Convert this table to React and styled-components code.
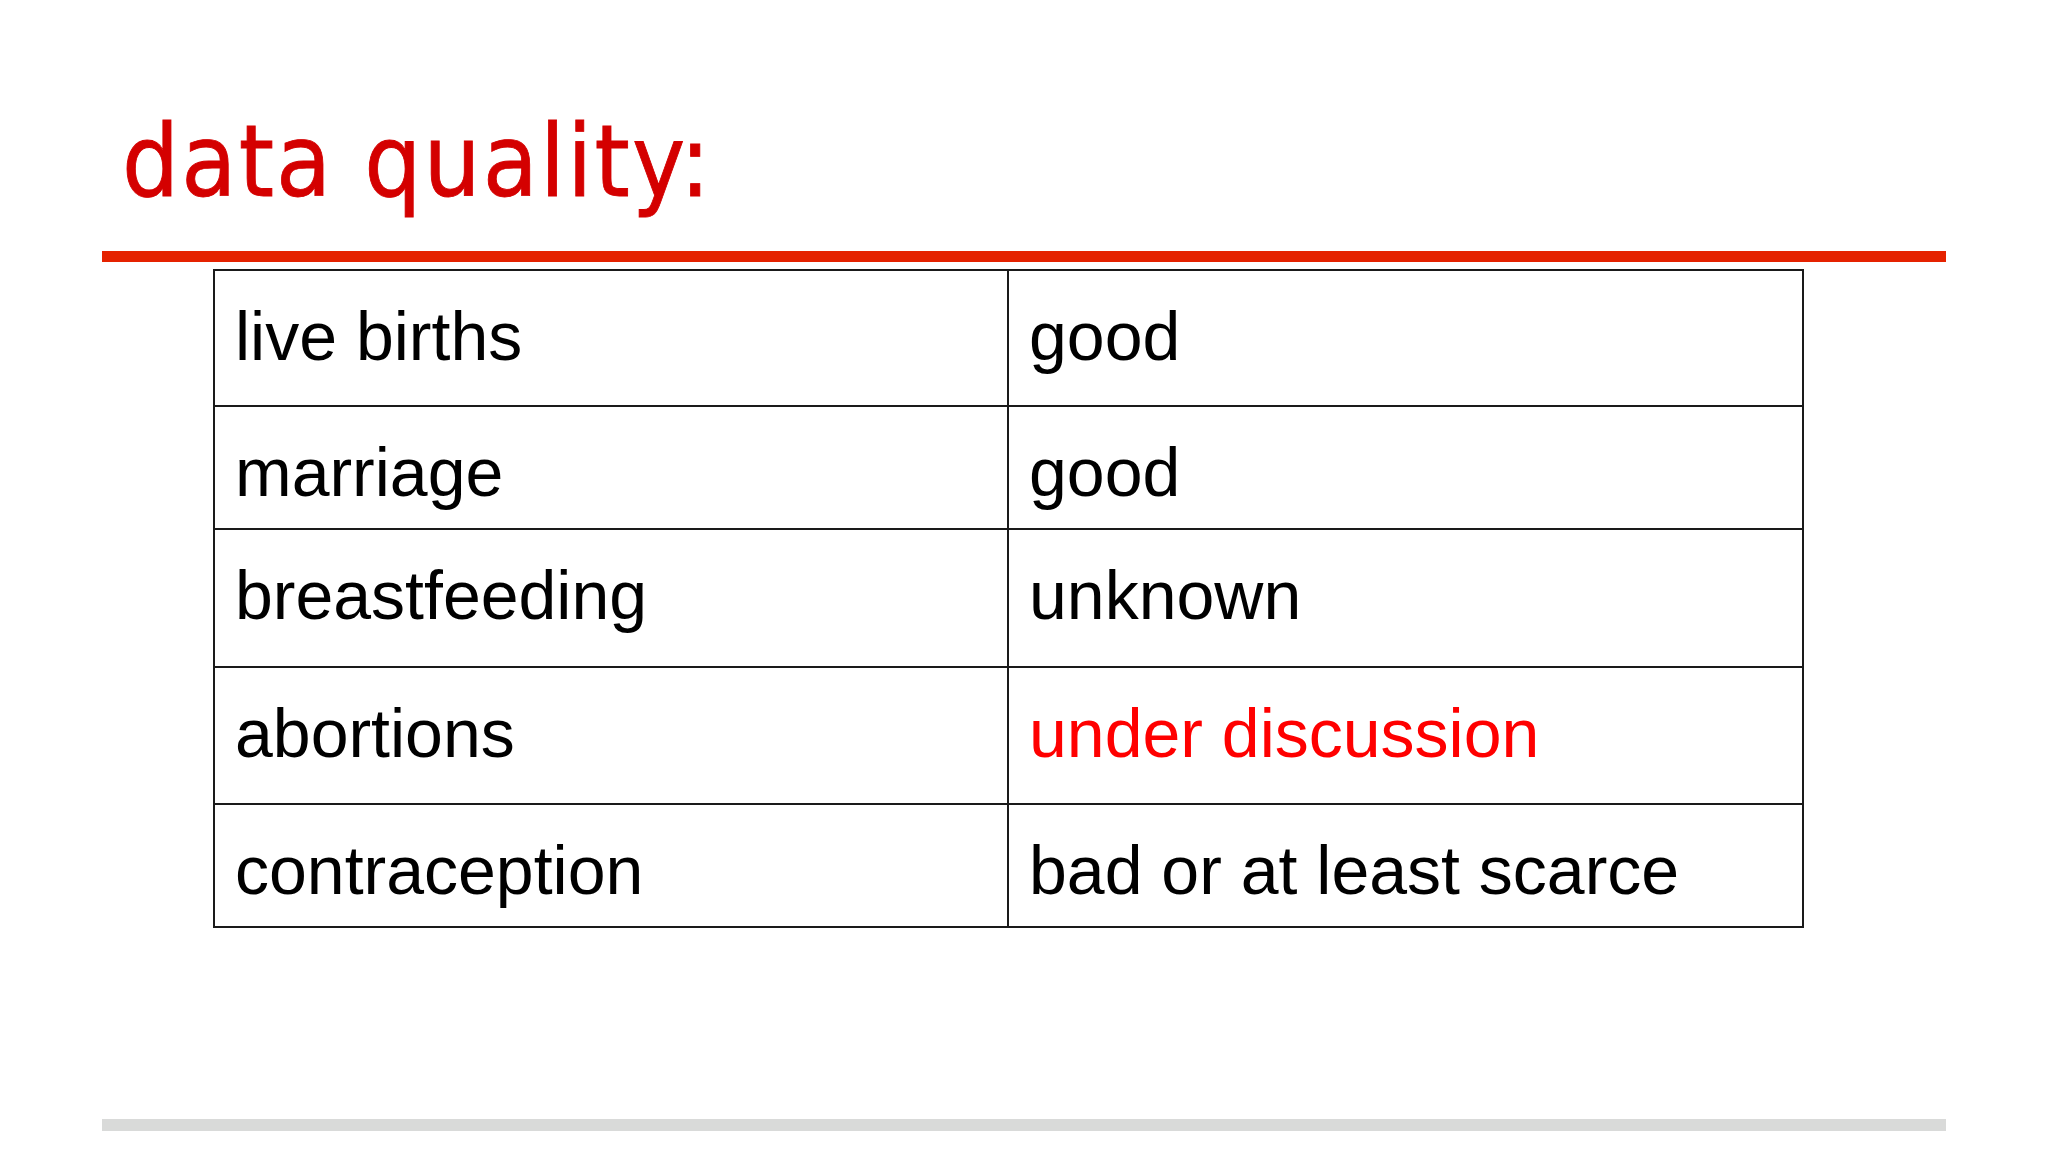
import React from 'react'
import styled, { createGlobalStyle } from 'styled-components'

const GlobalStyle = createGlobalStyle`
  html, body {
    margin: 0;
    padding: 0;
    background: #ffffff;
  }
`

const Slide = styled.div`
  width: 2048px;
  height: 1152px;
  box-sizing: border-box;
  padding: 112px 0 0 102px;
  background: #ffffff;
  display: flex;
  flex-direction: column;
  align-items: flex-start;
`

const Title = styled.h1`
  margin: 0 0 0 20px;
  font-family: "DejaVu Sans Condensed", "DejaVu Sans", sans-serif;
  font-stretch: condensed;
  font-weight: normal;
  font-size: 100px;
  line-height: 100px;
  letter-spacing: 2.2px;
  color: #d40000;
  -webkit-text-stroke: 0.8px #d40000;
`

const Rule = styled.div`
  width: 1844px;
  height: ${(p) => p.thickness}px;
  margin-top: ${(p) => p.offset}px;
  background: ${(p) => p.color};
`

const Table = styled.div`
  margin: 7px 0 0 111px;
  display: grid;
  grid-template-columns: 794px 795px;
  border-top: 2px solid #1a1a1a;
  border-left: 2px solid #1a1a1a;
`

const Cell = styled.div`
  box-sizing: border-box;
  height: ${(p) => p.height}px;
  padding: 26px 0 0 20px;
  border-right: 2px solid #1a1a1a;
  border-bottom: 2px solid #1a1a1a;
  font-family: "Liberation Sans", Arial, sans-serif;
  font-size: 68px;
  color: ${(p) => (p.highlight ? '#ff0000' : '#000000')};
  white-space: nowrap;
`

const rows = [
  { label: 'live births', value: 'good', height: 136 },
  { label: 'marriage', value: 'good', height: 123 },
  { label: 'breastfeeding', value: 'unknown', height: 138 },
  { label: 'abortions', value: 'under discussion', height: 137, highlight: true },
  { label: 'contraception', value: 'bad or at least scarce', height: 123 }
]

const App = () => {
  return (
    <>
      <GlobalStyle />
      <Slide>
        <Title>data quality:</Title>
        <Rule thickness={11} offset={39} color='#e52200' />
        <Table>
          {rows.map((row, i) => (
            <React.Fragment key={i}>
              <Cell height={row.height}>{row.label}</Cell>
              <Cell height={row.height} highlight={row.highlight}>{row.value}</Cell>
            </React.Fragment>
          ))}
        </Table>
        <Rule thickness={12} offset={191} color='#d9dad9' />
      </Slide>
    </>
  )
}

export default App
